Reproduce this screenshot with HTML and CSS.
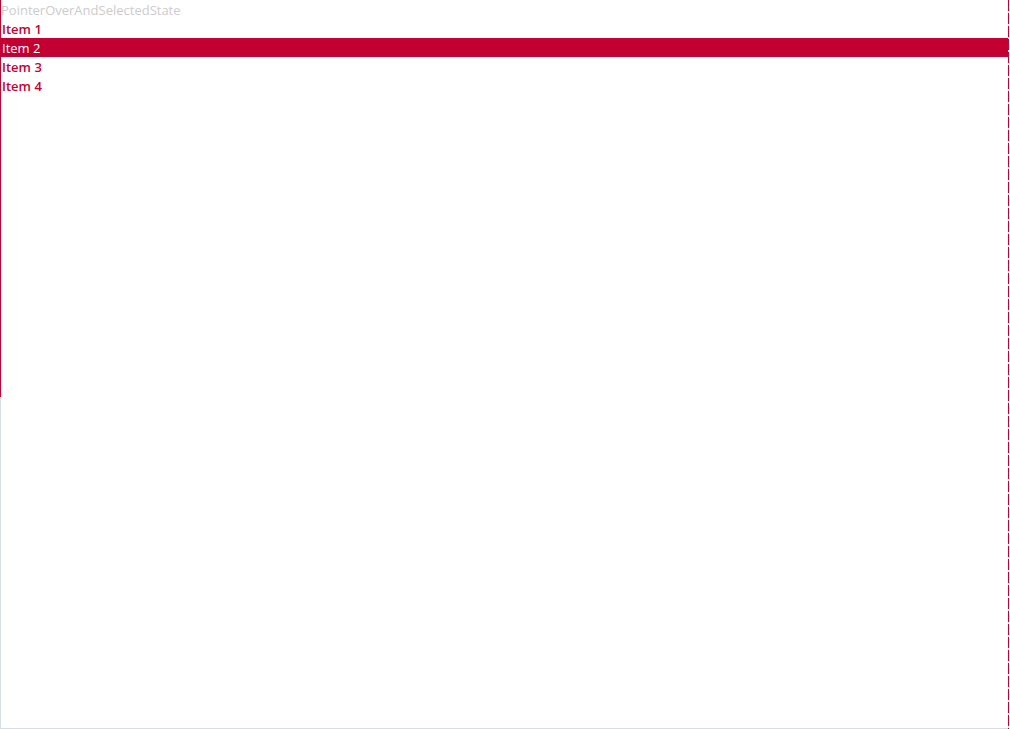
FILE: index.html
```html
<!DOCTYPE html>
<html>
<head>
<meta charset="utf-8">
<link rel="stylesheet" href="styles.css">
</head>
<body>
<div class="frame">
  <div class="title">PointerOverAndSelectedState</div>
  <ul class="list">
    <li class="item">Item 1</li>
    <li class="item selected">Item 2</li>
    <li class="item">Item 3</li>
    <li class="item">Item 4</li>
  </ul>
</div>
</body>
</html>
```

FILE: styles.css
```css
html, body {
  margin: 0;
  padding: 0;
  background: #ffffff;
}
.frame {
  width: 1010px;
  height: 729px;
  box-sizing: border-box;
  font-family: "Open Sans", "Noto Sans", sans-serif;
  font-size: 13px;
  background:
    linear-gradient(to bottom, #c30032 0, #c30032 397px, #d3dee5 397px) 0 0 / 1px 100% no-repeat,
    repeating-linear-gradient(to bottom, #c30032 0, #c30032 11px, #d3dee5 11px, #d3dee5 13px) 1008px 0 / 1px 100% no-repeat,
    linear-gradient(#d3dee5, #d3dee5) 0 728px / 1009px 1px no-repeat,
    #ffffff;
}
.title {
  height: 19px;
  line-height: 20px;
  padding-left: 1px;
  color: #cccccc;
}
.list {
  list-style: none;
  margin: 0;
  padding: 0;
  width: 1008px;
}
.item {
  height: 19px;
  line-height: 21px;
  padding-left: 2px;
  color: #c30032;
  font-weight: 600;
}
.item.selected {
  background: #c30032;
  color: #ffffff;
  font-weight: 400;
}
```
